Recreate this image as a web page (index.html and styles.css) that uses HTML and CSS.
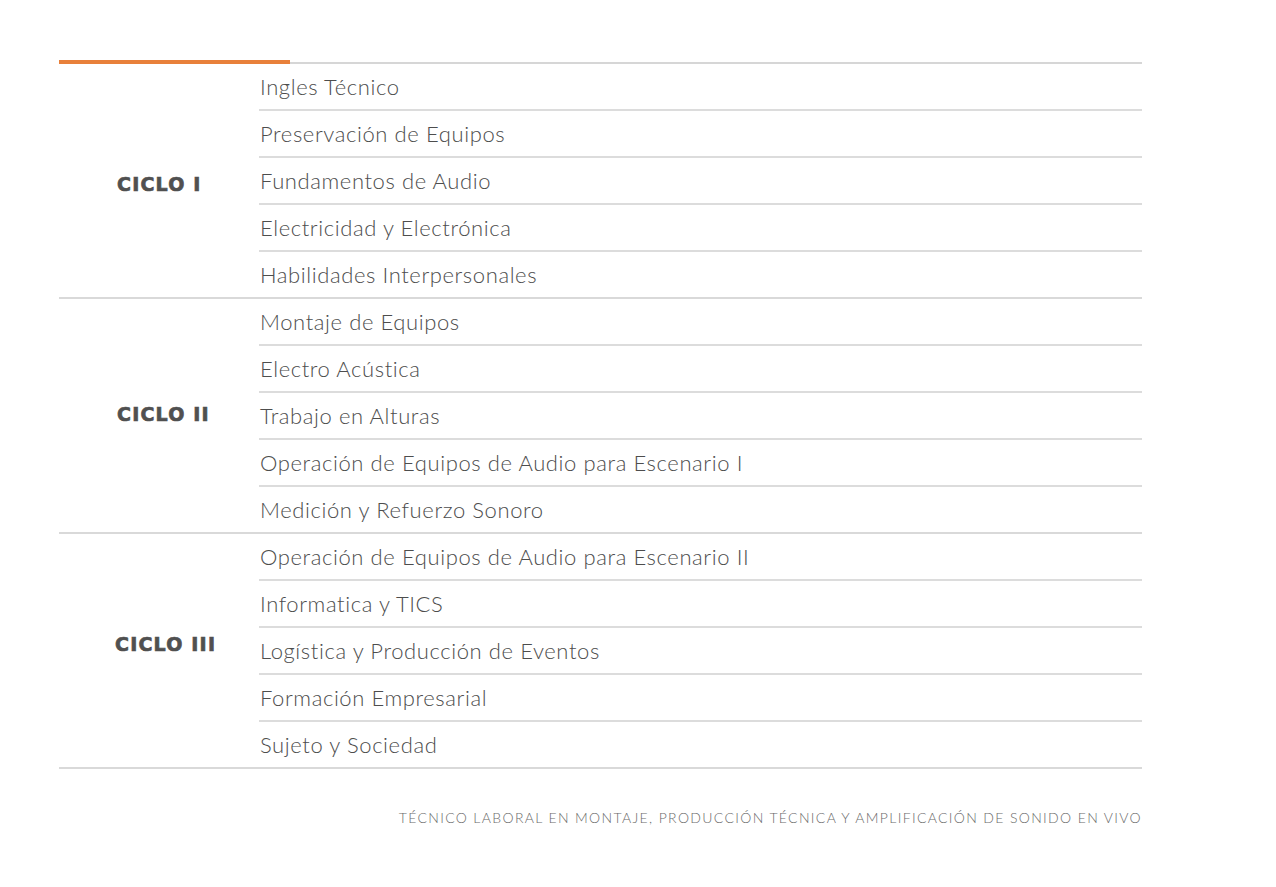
FILE: index.html
```html
<!DOCTYPE html>
<html lang="es">
<head>
<meta charset="utf-8">
<title>Plan de estudios</title>
<link rel="stylesheet" href="styles.css">
</head>
<body>
<div class="page">
  <div class="topbar"><span class="accent"></span></div>
  <section class="cycle cycle-1">
    <div class="label">CICLO I</div>
    <ul class="items">
      <li>Ingles Técnico</li>
      <li>Preservación de Equipos</li>
      <li>Fundamentos de Audio</li>
      <li>Electricidad y Electrónica</li>
      <li>Habilidades Interpersonales</li>
    </ul>
  </section>
  <section class="cycle cycle-2">
    <div class="label">CICLO II</div>
    <ul class="items">
      <li>Montaje de Equipos</li>
      <li>Electro Acústica</li>
      <li>Trabajo en Alturas</li>
      <li>Operación de Equipos de Audio para Escenario I</li>
      <li>Medición y Refuerzo Sonoro</li>
    </ul>
  </section>
  <section class="cycle cycle-3">
    <div class="label">CICLO III</div>
    <ul class="items">
      <li>Operación de Equipos de Audio para Escenario II</li>
      <li>Informatica y TICS</li>
      <li>Logística y Producción de Eventos</li>
      <li>Formación Empresarial</li>
      <li>Sujeto y Sociedad</li>
    </ul>
  </section>
  <p class="footer">TÉCNICO LABORAL EN MONTAJE, PRODUCCIÓN TÉCNICA Y AMPLIFICACIÓN DE SONIDO EN VIVO</p>
</div>
</body>
</html>
```
FILE: styles.css
```css
html, body {
  margin: 0;
  padding: 0;
  background: #ffffff;
}
body {
  font-family: "Lato", "Open Sans", sans-serif;
  color: #555555;
}
.page {
  width: 1083px;
  margin: 60px 0 0 59px;
}
.topbar {
  height: 4px;
  display: flex;
  align-items: flex-end;
  border-bottom: 2px solid #d6d6d6;
  box-sizing: border-box;
}
.topbar .accent {
  display: block;
  width: 231px;
  height: 4px;
  margin-bottom: -2px;
  background: #e8803a;
}
.cycle {
  display: grid;
  grid-template-columns: 200px 1fr;
  border-bottom: 2px solid #d9d9d9;
}
.label {
  display: flex;
  align-items: center;
  padding-left: 58px;
  font-family: "DejaVu Sans", sans-serif;
  font-weight: 700;
  font-size: 19px;
  letter-spacing: 1.2px;
  color: #505050;
  -webkit-text-stroke: 0.7px #505050;
}
.cycle-1 .label { padding-top: 6px; }
.cycle-2 .label { padding-bottom: 4px; }
.cycle-3 .label { padding-bottom: 14px; padding-left: 56px; }
.items {
  list-style: none;
  margin: 0;
  padding: 0;
}
.items li {
  height: 45px;
  display: flex;
  align-items: center;
  padding-left: 1px;
  font-weight: 300;
  font-size: 22px;
  letter-spacing: 0.6px;
  color: #4d4d4d;
  border-bottom: 2px solid #dcdcdc;
}
.items li:last-child {
  border-bottom: none;
}
.footer {
  margin: 40px 0 0 0;
  text-align: right;
  font-weight: 300;
  font-size: 14px;
  letter-spacing: 1.35px;
  color: #6a6a6a;
}
```
